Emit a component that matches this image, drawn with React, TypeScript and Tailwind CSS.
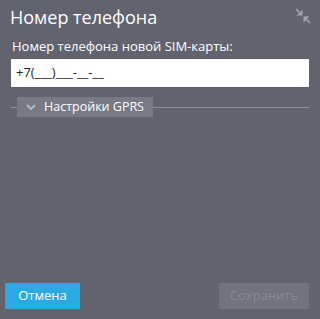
import React from 'react';

export default function App() {
  return (
    <div
      className="w-[320px] h-[319px] bg-[#61636e] flex flex-col text-white"
      style={{ fontFamily: '"Open Sans", "Noto Sans", sans-serif' }}
    >
      {/* Header */}
      <div className="flex items-start justify-between pl-[10px] pr-[9px] pt-[5px]">
        <h1 className="text-[18px] leading-[24px] text-white">Номер телефона</h1>
        <svg width="16" height="16" viewBox="0 0 16 16" className="mt-[3px]" fill="#a3a5ae">
          <path d="M1.5 0.5 L5 4 L4 5 L0.5 1.5 Z" />
          <path d="M7.5 1.5 L7.5 7.5 L1.5 7.5 Z" />
          <path d="M14.5 15.5 L11 12 L12 11 L15.5 14.5 Z" />
          <path d="M8.5 14.5 L8.5 8.5 L14.5 8.5 Z" />
        </svg>
      </div>

      {/* Body */}
      <div className="px-[11px] mt-[9px] flex-1">
        <label className="block text-[13px] leading-[16px] pl-[1px] text-white">
          Номер телефона новой SIM-карты:
        </label>
        <div className="mt-[5px] bg-white h-[28px] flex items-center px-[5px] text-[13px] text-[#222]">
          +7(___)___-__-__
        </div>

        <div className="relative mt-[10px] flex items-center h-[20px]">
          <div className="absolute left-0 right-0 top-[10px] h-px bg-[#8b8d97]" />
          <button className="relative ml-[6px] h-[20px] pl-[9px] pr-[9px] bg-[#777985] flex items-center gap-[8px] text-[12.5px] text-white">
            <svg width="10" height="7" viewBox="0 0 10 7" fill="none" stroke="#b9bbc3" strokeWidth="1.8">
              <path d="M1 1 L5 5 L9 1" />
            </svg>
            Настройки GPRS
          </button>
        </div>
      </div>

      {/* Footer */}
      <div className="flex justify-between items-center px-[5px] pr-[11px] pb-[10px]">
        <button className="h-[26px] w-[75px] bg-[#29abe2] text-white text-[13px]">Отмена</button>
        <button className="h-[26px] w-[90px] bg-[#71737e] text-[#888a95] text-[13px]">Сохранить</button>
      </div>
    </div>
  );
}
